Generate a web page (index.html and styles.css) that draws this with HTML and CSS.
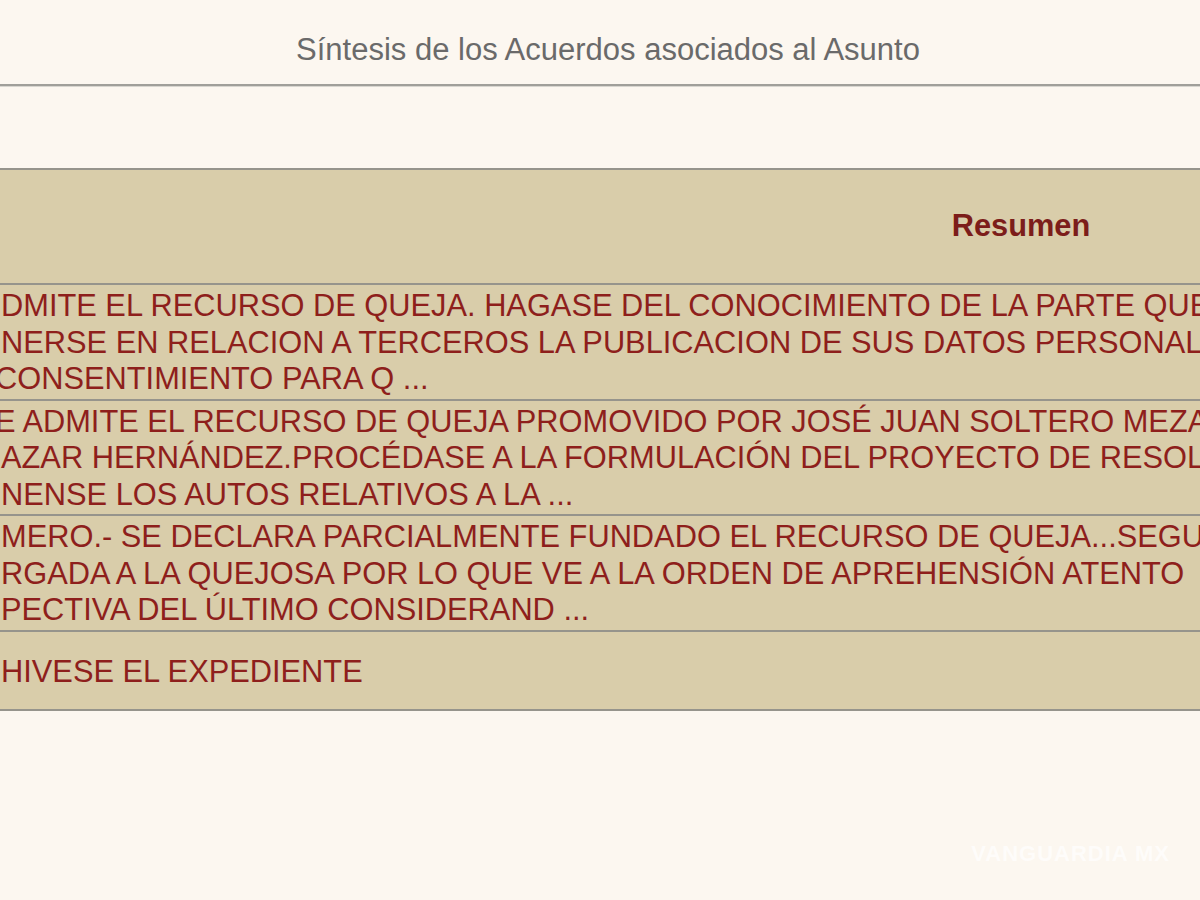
FILE: index.html
```html
<!DOCTYPE html>
<html lang="es">
<head>
<meta charset="utf-8">
<title>Síntesis de los Acuerdos asociados al Asunto</title>
<link rel="stylesheet" href="styles.css">
</head>
<body>
<div class="page">
  <div class="title-bar">
    <h1 class="title">Síntesis de los Acuerdos asociados al Asunto</h1>
  </div>
  <div class="grid">
    <div class="head">Resumen</div>
    <div class="row">
      <span class="line">DMITE EL RECURSO DE QUEJA. HAGASE DEL CONOCIMIENTO DE LA PARTE QUE</span>
      <span class="line">NERSE EN RELACION A TERCEROS LA PUBLICACION DE SUS DATOS PERSONALES</span>
      <span class="line shift">CONSENTIMIENTO PARA Q ...</span>
    </div>
    <div class="row">
      <span class="line shift">E ADMITE EL RECURSO DE QUEJA PROMOVIDO POR JOSÉ JUAN SOLTERO MEZA</span>
      <span class="line">AZAR HERNÁNDEZ.PROCÉDASE A LA FORMULACIÓN DEL PROYECTO DE RESOLUCIÓN</span>
      <span class="line">NENSE LOS AUTOS RELATIVOS A LA ...</span>
    </div>
    <div class="row">
      <span class="line">MERO.- SE DECLARA PARCIALMENTE FUNDADO EL RECURSO DE QUEJA...SEGUNDO</span>
      <span class="line">RGADA A LA QUEJOSA POR LO QUE VE A LA ORDEN DE APREHENSIÓN ATENTO</span>
      <span class="line">PECTIVA DEL ÚLTIMO CONSIDERAND ...</span>
    </div>
    <div class="row single">
      <span class="line">HIVESE EL EXPEDIENTE</span>
    </div>
  </div>
</div>
<div class="watermark">VANGUARDIA MX</div>
</body>
</html>
```

FILE: styles.css
```css
html, body {
  margin: 0;
  padding: 0;
}

body {
  background: #fcf7f0;
  overflow: hidden;
  width: 1200px;
  height: 900px;
  font-family: "Liberation Sans", Arial, sans-serif;
  position: relative;
}

.page {
  width: 1200px;
}

.title-bar {
  height: 84px;
  border-bottom: 2px solid #a09f9a;
  box-shadow: 0 1px 0 #d8d6d0;
}

.title {
  margin: 0;
  padding: 33px 0 0 16px;
  font-size: 31px;
  font-weight: normal;
  line-height: 34px;
  color: #6a6a6a;
  text-align: center;
}

.grid {
  margin-top: 82px;
  margin-left: -10px;
  width: 2062px;
  background: #d9cdaa;
  border-top: 2px solid #96948c;
  color: #8e1f1c;
  font-size: 30.8px;
}

.head {
  height: 115px;
  padding-bottom: 1px;
  box-sizing: border-box;
  display: flex;
  align-items: center;
  justify-content: center;
  font-weight: bold;
  color: #7c1d1a;
  border-bottom: 2px solid #96948c;
}

.row {
  padding: 3px 0 1px 11px;
  line-height: 36.5px;
  border-bottom: 2px solid #96948c;
  white-space: nowrap;
}

.line {
  display: block;
}

.shift {
  margin-left: -6px;
}

.row.single {
  height: 73px;
  padding-top: 4px;
  padding-bottom: 0;
  display: flex;
  align-items: center;
}

.watermark {
  position: absolute;
  right: 30px;
  bottom: 33px;
  font-size: 22px;
  font-weight: bold;
  color: #ffffff;
  opacity: 0.7;
  letter-spacing: 1px;
}
```
